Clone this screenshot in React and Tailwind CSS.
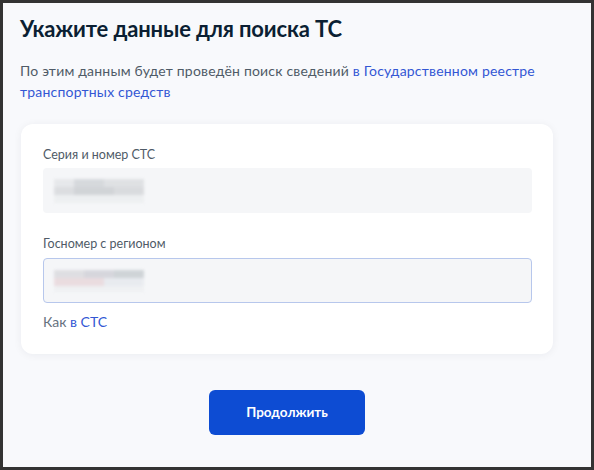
export default function App() {
  return (
    <div className="w-[594px] h-[470px] bg-[#333333] p-[3px] font-['Lato',sans-serif]">
      <div className="h-full bg-[#f8f9fc] flex flex-col px-[17px] pt-[11px]">
        <h1 className="text-[22px] leading-[30px] font-bold tracking-[-0.15px] text-[#0b1f33]">
          Укажите данные для поиска ТС
        </h1>
        <p className="mt-[16px] text-[14px] leading-[21px] tracking-[0.2px] text-[#4f5b67]">
          По этим данным будет проведён поиск сведений{" "}
          <span className="text-[#3357d4]">в Государственном реестре</span>
          <br />
          <span className="text-[#3357d4]">транспортных средств</span>
        </p>

        <div className="w-[532px] flex flex-col ml-[1px]">
          {/* Card */}
          <div className="mt-[22px] bg-white rounded-[12px] shadow-[0_1px_8px_rgba(11,31,51,0.06)] pl-[22px] pr-[21px] pt-[22px] pb-[23px]">
            <div className="text-[12.5px] leading-[18px] text-[#4f5b67]">Серия и номер СТС</div>
            <div className="mt-[4px] h-[45px] rounded-[4px] bg-[#f5f6f8] flex items-center px-[11px]">
              <div className="flex flex-col blur-[1.5px] opacity-80">
                <div className="flex">
                  <div className="w-[20px] h-[8px] bg-[#e3e5e8]" />
                  <div className="w-[30px] h-[8px] bg-[#cfd2d6]" />
                  <div className="w-[40px] h-[8px] bg-[#dadcdf]" />
                </div>
                <div className="flex">
                  <div className="w-[20px] h-[8px] bg-[#d6d8db]" />
                  <div className="w-[40px] h-[8px] bg-[#c9ccd0]" />
                  <div className="w-[30px] h-[8px] bg-[#d3d5d8]" />
                </div>
                <div className="flex">
                  <div className="w-[90px] h-[8px] bg-[#eceef0]" />
                </div>
              </div>
            </div>

            <div className="mt-[22px] text-[12.5px] leading-[18px] text-[#4f5b67]">Госномер с регионом</div>
            <div className="mt-[5px] h-[45px] rounded-[4px] bg-[#f5f6f8] border border-[#b7c7ec] flex items-center px-[10px]">
              <div className="flex flex-col blur-[1.5px] opacity-80">
                <div className="flex">
                  <div className="w-[30px] h-[8px] bg-[#d9d9dd]" />
                  <div className="w-[30px] h-[8px] bg-[#cfcfd6]" />
                  <div className="w-[30px] h-[8px] bg-[#c6ccd0]" />
                </div>
                <div className="flex">
                  <div className="w-[50px] h-[8px] bg-[#e8d6da]" />
                  <div className="w-[40px] h-[8px] bg-[#e6e9ee]" />
                </div>
                <div className="flex">
                  <div className="w-[90px] h-[6px] bg-[#eef0f2]" />
                </div>
              </div>
            </div>

            <div className="mt-[10px] text-[14px] leading-[18px] text-[#66727f]">
              Как <span className="text-[#3357d4]">в СТС</span>
            </div>
          </div>

          <div className="flex justify-center mt-[36px]">
            <button className="w-[156px] h-[45px] rounded-[6px] bg-[#0d4cd3] text-white text-[13.5px] font-bold">
              Продолжить
            </button>
          </div>
        </div>
      </div>
    </div>
  );
}
